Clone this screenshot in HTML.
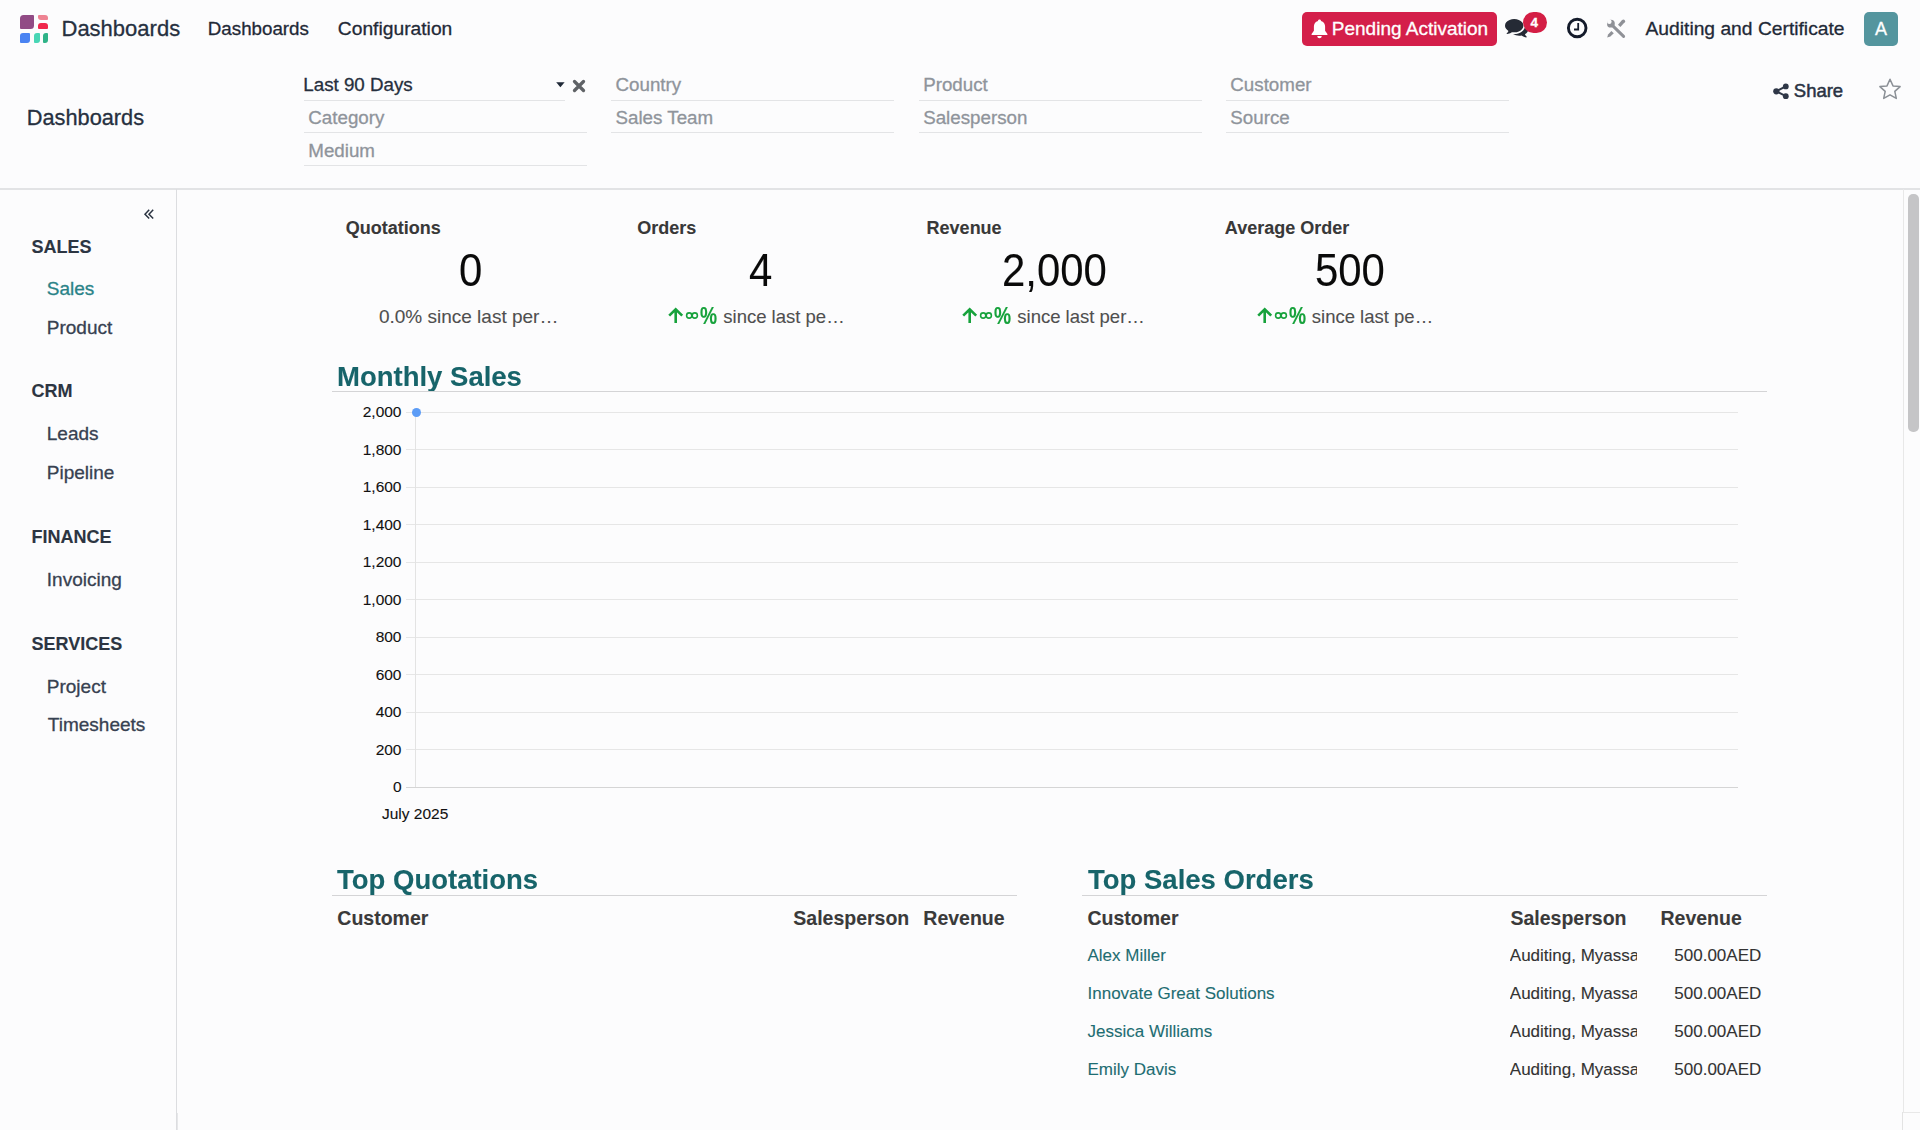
<!DOCTYPE html>
<html><head><meta charset="utf-8"><title>Dashboards</title>
<style>
html,body{margin:0;padding:0;}
body{width:1920px;height:1130px;overflow:hidden;position:relative;background:#fcfcfd;font-family:"Liberation Sans",sans-serif;}
.t{position:absolute;white-space:nowrap;-webkit-text-stroke:0.3px currentColor;}
.t.h{-webkit-text-stroke:0.1px currentColor;}
.r{position:absolute;display:block;}
</style></head><body>
<div class="r" style="left:20px;top:14.5px;width:14px;height:14.5px;background:#914b85;border-radius:3.5px 1px 3.5px 1px;"></div>
<div class="r" style="left:38px;top:14.5px;width:10px;height:5.5px;background:#ee8392;border-radius:1px 3px 1px 3px;"></div>
<div class="r" style="left:38px;top:23px;width:10px;height:6px;background:#f0284d;border-radius:3px 3px 1px 1px;"></div>
<div class="r" style="left:20px;top:33px;width:10px;height:10px;background:#4a83f2;border-radius:3px 1px 3px 1px;"></div>
<div class="r" style="left:34px;top:33px;width:5.5px;height:10px;background:#48d6b5;border-radius:3px 1px 3px 1px;"></div>
<div class="r" style="left:43px;top:33px;width:5px;height:10px;background:#2fb388;border-radius:3px 1px 3px 1px;"></div>
<div class="t" id="brand" style="left:61.5px;top:17.88px;font-size:22px;line-height:22px;color:#263040;">Dashboards</div>
<div class="t" id="m1" style="left:207.8px;top:20.13px;font-size:18.75px;line-height:18.75px;color:#1f2937;">Dashboards</div>
<div class="t" id="m2" style="left:337.8px;top:19.00px;font-size:19.25px;line-height:19.25px;color:#1f2937;">Configuration</div>
<div class="r" style="left:1301.5px;top:12px;width:195px;height:34px;background:#d41f4a;border-radius:5px;"></div>
<svg class="r" style="left:1311px;top:19px" width="17" height="20" viewBox="0 0 17 20"><path d="M8.5 0.5c0.9 0 1.5 0.6 1.5 1.4c2.6 0.6 4.1 2.9 4.1 5.6v4.2l2.3 3.3v1.1H0.6v-1.1l2.3-3.3V7.5c0-2.7 1.5-5 4.1-5.6c0-0.8 0.6-1.4 1.5-1.4z M6.3 17h4.4c0 1.3-1 2.3-2.2 2.3s-2.2-1-2.2-2.3z" fill="#fff"/></svg>
<div class="t" id="pend" style="left:1331.8px;top:19.32px;font-size:19px;line-height:19px;color:#fff;">Pending Activation</div>
<svg class="r" style="left:1505.4px;top:19.2px" width="23.4" height="18.4" viewBox="0 256 1792 1408"><path d="M1408 768q0 139-94 257t-256.5 186.5-353.5 68.5q-86 0-176-16-124 88-278 128-36 9-86 16h-3q-11 0-20.5-8t-11.5-21q-1-3-1-6.5t.5-6.5 2-6l2.5-5 3.5-5.5 4-5 4.5-5 4-4.5q5-6 23-25t26-29.5 22.5-29 25-38.5 20.5-44q-124-72-195-177t-71-224q0-139 94-257t256.5-186.5 353.5-68.5 353.5 68.5 256.5 186.5 94 257zm384 256q0 120-71 224.5t-195 176.5q10 24 20.5 44t25 38.5 22.5 29 26 29.5 23 25q1 1 4 4.5t4.5 5 4 5 3.5 5.5l2.5 5 2 6 .5 6.5-1 6.5q-3 14-13 22t-22 7q-50-7-86-16-154-40-278-128-90 16-176 16-271 0-472-132 58 4 88 4 161 0 309-45t264-129q125-92 192-212t67-254q0-77-23-152 129 71 204 178t75 230z" fill="#252a35"/></svg>
<div class="r" style="left:1523px;top:12px;width:23.5px;height:21px;background:#d41e45;border-radius:11px;"></div>
<div class="t" id="badge" style="left:1530.6px;top:15.67px;font-size:13.5px;line-height:13.5px;color:#fff;font-weight:700;">4</div>
<svg class="r" style="left:1565px;top:16px" width="25" height="25" viewBox="0 0 25 25"><circle cx="12.2" cy="12" r="8.8" fill="none" stroke="#141b2b" stroke-width="2.9"/><path d="M13.2 7v6.5H9" fill="none" stroke="#141b2b" stroke-width="1.8"/></svg>
<svg class="r" style="left:1603px;top:16px" width="26" height="25" viewBox="0 0 26 25"><defs><mask id="wm"><rect x="0" y="0" width="26" height="25" fill="#fff"/><circle cx="6.3" cy="5.8" r="2.3" fill="#000"/></mask></defs><path d="M10.6 10.6L20.6 20.4" stroke="#8f9197" stroke-width="3" stroke-linecap="round"/><circle cx="7.9" cy="7.7" r="3.9" fill="#8f9197" mask="url(#wm)"/><path d="M16.2 9.8L20.4 5.2" stroke="#8f9197" stroke-width="3.4"/><circle cx="20.4" cy="5.2" r="1.7" fill="#8f9197"/><path d="M8.4 15L10.8 17.3L7.4 20.6L4.2 21.6L5.1 18.5z" fill="#8f9197"/></svg>
<div class="t" id="user" style="left:1645.5px;top:19.00px;font-size:19.25px;line-height:19.25px;color:#1f2937;">Auditing and Certificate</div>
<div class="r" style="left:1864px;top:12px;width:34px;height:34px;background:#54959e;border-radius:5px;"></div>
<div class="t" id="av" style="left:1864px;top:20.06px;font-size:18px;line-height:18px;color:#fff;width:34px;text-align:center;">A</div>
<div class="t" id="bc" style="left:26.8px;top:107.09px;font-size:21.75px;line-height:21.75px;color:#263040;">Dashboards</div>
<div class="t" id="f1" style="left:303.3px;top:76.33px;font-size:18.75px;line-height:18.75px;color:#262f3d;">Last 90 Days</div>
<div class="r" style="left:303.8px;top:100px;width:261.5px;height:1px;background:#e3e4e6;"></div>
<svg class="r" style="left:556px;top:81.5px" width="9" height="6" viewBox="0 0 9 6"><path d="M0.2 0.3h8.4L4.4 5.2z" fill="#1f2937"/></svg>
<svg class="r" style="left:572px;top:79px" width="14" height="14" viewBox="0 0 14 14"><path d="M2.5 2.5l9 9M11.5 2.5l-9 9" stroke="#5f6266" stroke-width="3.3" stroke-linecap="round"/></svg>
<div class="t" id="ph01" style="left:308.3px;top:108.73px;font-size:18.75px;line-height:18.75px;color:#8f949b;">Category</div>
<div class="r" style="left:303.8px;top:132.2px;width:283px;height:1px;background:#e3e4e6;"></div>
<div class="t" id="ph02" style="left:308.3px;top:141.53px;font-size:18.75px;line-height:18.75px;color:#8f949b;">Medium</div>
<div class="r" style="left:303.8px;top:165.4px;width:283px;height:1px;background:#e3e4e6;"></div>
<div class="t" id="ph10" style="left:615.5px;top:76.33px;font-size:18.75px;line-height:18.75px;color:#8f949b;">Country</div>
<div class="r" style="left:611px;top:100px;width:283px;height:1px;background:#e3e4e6;"></div>
<div class="t" id="ph11" style="left:615.5px;top:108.73px;font-size:18.75px;line-height:18.75px;color:#8f949b;">Sales Team</div>
<div class="r" style="left:611px;top:132.2px;width:283px;height:1px;background:#e3e4e6;"></div>
<div class="t" id="ph20" style="left:923.2px;top:76.33px;font-size:18.75px;line-height:18.75px;color:#8f949b;">Product</div>
<div class="r" style="left:918.7px;top:100px;width:283px;height:1px;background:#e3e4e6;"></div>
<div class="t" id="ph21" style="left:923.2px;top:108.73px;font-size:18.75px;line-height:18.75px;color:#8f949b;">Salesperson</div>
<div class="r" style="left:918.7px;top:132.2px;width:283px;height:1px;background:#e3e4e6;"></div>
<div class="t" id="ph30" style="left:1230.3px;top:76.33px;font-size:18.75px;line-height:18.75px;color:#8f949b;">Customer</div>
<div class="r" style="left:1225.8px;top:100px;width:283px;height:1px;background:#e3e4e6;"></div>
<div class="t" id="ph31" style="left:1230.3px;top:108.73px;font-size:18.75px;line-height:18.75px;color:#8f949b;">Source</div>
<div class="r" style="left:1225.8px;top:132.2px;width:283px;height:1px;background:#e3e4e6;"></div>
<svg class="r" style="left:1771px;top:82px" width="20" height="18" viewBox="0 0 20 18"><path d="M5.3 9.3L14.8 4.4M5.3 9.3L14.8 14.2" stroke="#2f3747" stroke-width="2"/><circle cx="5.3" cy="9.3" r="3.1" fill="#2f3747"/><circle cx="14.8" cy="4.4" r="2.9" fill="#2f3747"/><circle cx="14.8" cy="14.2" r="2.9" fill="#2f3747"/></svg>
<div class="t" id="share" style="left:1793.8px;top:82.14px;font-size:18.5px;line-height:18.5px;color:#2a3343;-webkit-text-stroke:0.5px #2a3343;">Share</div>
<svg class="r" style="left:1877px;top:77px" width="26" height="25" viewBox="0 0 26 25"><path d="M13 2.3l3 6.6l7.1 0.7l-5.3 4.8l1.5 7l-6.3-3.6l-6.3 3.6l1.5-7l-5.3-4.8l7.1-0.7z" fill="none" stroke="#8b9096" stroke-width="1.5" stroke-linejoin="round"/></svg>
<div class="r" style="left:0px;top:188px;width:1920px;height:1.5px;background:#e2e3e5;"></div>
<div class="r" style="left:176px;top:189px;width:1px;height:941px;background:#dcdde0;"></div>
<div class="r" style="left:177px;top:1113px;width:1px;height:17px;background:#e6e7e9;"></div>
<svg class="r" style="left:142.8px;top:208px" width="13" height="13" viewBox="0 0 13 13"><path d="M6.2 1.8L2 6.2l4.2 4.4M10.2 1.8L6 6.2l4.2 4.4" fill="none" stroke="#2b3442" stroke-width="1.5"/></svg>
<div class="t h" id="s_sales" style="left:31.5px;top:237.56px;font-size:18px;line-height:18px;color:#2c3542;font-weight:700;">SALES</div>
<div class="t" id="s1" style="left:46.8px;top:279.42px;font-size:19px;line-height:19px;color:#2a8388;">Sales</div>
<div class="t" id="s2" style="left:46.8px;top:317.72px;font-size:19px;line-height:19px;color:#374151;">Product</div>
<div class="t h" id="s_crm" style="left:31.5px;top:382.26px;font-size:18px;line-height:18px;color:#2c3542;font-weight:700;">CRM</div>
<div class="t" id="s3" style="left:46.8px;top:424.42px;font-size:19px;line-height:19px;color:#374151;">Leads</div>
<div class="t" id="s4" style="left:46.8px;top:462.72px;font-size:19px;line-height:19px;color:#374151;">Pipeline</div>
<div class="t h" id="s_fin" style="left:31.5px;top:527.76px;font-size:18px;line-height:18px;color:#2c3542;font-weight:700;">FINANCE</div>
<div class="t" id="s5" style="left:46.8px;top:570.22px;font-size:19px;line-height:19px;color:#374151;">Invoicing</div>
<div class="t h" id="s_srv" style="left:31.5px;top:634.76px;font-size:18px;line-height:18px;color:#2c3542;font-weight:700;">SERVICES</div>
<div class="t" id="s6" style="left:46.8px;top:676.92px;font-size:19px;line-height:19px;color:#374151;">Project</div>
<div class="t" id="s7" style="left:47.8px;top:714.92px;font-size:19px;line-height:19px;color:#374151;">Timesheets</div>
<div class="t h" id="kt0" style="left:345.7px;top:218.86px;font-size:18px;line-height:18px;color:#383838;font-weight:700;">Quotations</div>
<div class="t h" id="kn0" style="left:458.7px;top:247.65px;font-size:45.3px;line-height:45.3px;color:#0a0a0a;transform:scaleX(0.925);transform-origin:0 0;">0</div>
<div class="t h" id="ks0" style="left:378.9px;top:306.92px;font-size:19px;line-height:19px;color:#4f4f4f;">0.0% since last per…</div>
<div class="t h" id="kt1" style="left:637.2px;top:218.86px;font-size:18px;line-height:18px;color:#383838;font-weight:700;">Orders</div>
<div class="t h" id="kn1" style="left:748.7px;top:247.65px;font-size:45.3px;line-height:45.3px;color:#0a0a0a;transform:scaleX(0.925);transform-origin:0 0;">4</div>
<svg class="r" style="left:668px;top:307px" width="16" height="17" viewBox="0 0 16 17"><path d="M7.7 16V2.5M1.2 8.6L7.7 2.2l6.5 6.4" fill="none" stroke="#17a23c" stroke-width="2.6"/></svg>
<svg class="r" style="left:684px;top:310px" width="16" height="12" viewBox="0 0 16 12"><ellipse cx="5.2" cy="5.5" rx="2.6" ry="2.65" fill="none" stroke="#17a23c" stroke-width="1.6"/><ellipse cx="10.8" cy="5.5" rx="2.6" ry="2.65" fill="none" stroke="#17a23c" stroke-width="1.6"/></svg>
<div class="t h" id="ki1" style="left:700.3px;top:306.67px;font-size:20px;line-height:20px;color:#17a23c;font-weight:700;transform:scale(0.96,1.17);transform-origin:0 16.9px;">%</div>
<div class="t h" id="ks1" style="left:723.3px;top:308.14px;font-size:18.5px;line-height:18.5px;color:#4f4f4f;">since last pe…</div>
<div class="t h" id="kt2" style="left:926.6px;top:218.86px;font-size:18px;line-height:18px;color:#383838;font-weight:700;">Revenue</div>
<div class="t h" id="kn2" style="left:1001.5px;top:247.65px;font-size:45.3px;line-height:45.3px;color:#0a0a0a;transform:scaleX(0.925);transform-origin:0 0;">2,000</div>
<svg class="r" style="left:962px;top:307px" width="16" height="17" viewBox="0 0 16 17"><path d="M7.7 16V2.5M1.2 8.6L7.7 2.2l6.5 6.4" fill="none" stroke="#17a23c" stroke-width="2.6"/></svg>
<svg class="r" style="left:978px;top:310px" width="16" height="12" viewBox="0 0 16 12"><ellipse cx="5.2" cy="5.5" rx="2.6" ry="2.65" fill="none" stroke="#17a23c" stroke-width="1.6"/><ellipse cx="10.8" cy="5.5" rx="2.6" ry="2.65" fill="none" stroke="#17a23c" stroke-width="1.6"/></svg>
<div class="t h" id="ki2" style="left:994.3px;top:306.67px;font-size:20px;line-height:20px;color:#17a23c;font-weight:700;transform:scale(0.96,1.17);transform-origin:0 16.9px;">%</div>
<div class="t h" id="ks2" style="left:1017.3px;top:308.14px;font-size:18.5px;line-height:18.5px;color:#4f4f4f;">since last per…</div>
<div class="t h" id="kt3" style="left:1224.8px;top:218.86px;font-size:18px;line-height:18px;color:#383838;font-weight:700;">Average Order</div>
<div class="t h" id="kn3" style="left:1314.5px;top:247.65px;font-size:45.3px;line-height:45.3px;color:#0a0a0a;transform:scaleX(0.925);transform-origin:0 0;">500</div>
<svg class="r" style="left:1256.5px;top:307px" width="16" height="17" viewBox="0 0 16 17"><path d="M7.7 16V2.5M1.2 8.6L7.7 2.2l6.5 6.4" fill="none" stroke="#17a23c" stroke-width="2.6"/></svg>
<svg class="r" style="left:1272.5px;top:310px" width="16" height="12" viewBox="0 0 16 12"><ellipse cx="5.2" cy="5.5" rx="2.6" ry="2.65" fill="none" stroke="#17a23c" stroke-width="1.6"/><ellipse cx="10.8" cy="5.5" rx="2.6" ry="2.65" fill="none" stroke="#17a23c" stroke-width="1.6"/></svg>
<div class="t h" id="ki3" style="left:1288.8px;top:306.67px;font-size:20px;line-height:20px;color:#17a23c;font-weight:700;transform:scale(0.96,1.17);transform-origin:0 16.9px;">%</div>
<div class="t h" id="ks3" style="left:1311.8px;top:308.14px;font-size:18.5px;line-height:18.5px;color:#4f4f4f;">since last pe…</div>
<div class="t h" id="h_ms" style="left:337px;top:361.67px;font-size:28.5px;line-height:28.5px;color:#17646a;font-weight:700;transform:scaleX(0.965);transform-origin:0 0;">Monthly Sales</div>
<div class="r" style="left:332px;top:390.5px;width:1435px;height:1.5px;background:#d4d4d6;"></div>
<div class="r" style="left:406px;top:411.5px;width:1332px;height:1px;background:#e6e6e6;"></div>
<div class="t h" id="yl0" style="right:1518.5px;text-align:right;top:404.08px;font-size:15.5px;line-height:15.5px;color:#111;">2,000</div>
<div class="r" style="left:406px;top:449.0px;width:1332px;height:1px;background:#e6e6e6;"></div>
<div class="t h" id="yl1" style="right:1518.5px;text-align:right;top:441.58px;font-size:15.5px;line-height:15.5px;color:#111;">1,800</div>
<div class="r" style="left:406px;top:486.5px;width:1332px;height:1px;background:#e6e6e6;"></div>
<div class="t h" id="yl2" style="right:1518.5px;text-align:right;top:479.08px;font-size:15.5px;line-height:15.5px;color:#111;">1,600</div>
<div class="r" style="left:406px;top:524.0px;width:1332px;height:1px;background:#e6e6e6;"></div>
<div class="t h" id="yl3" style="right:1518.5px;text-align:right;top:516.58px;font-size:15.5px;line-height:15.5px;color:#111;">1,400</div>
<div class="r" style="left:406px;top:561.5px;width:1332px;height:1px;background:#e6e6e6;"></div>
<div class="t h" id="yl4" style="right:1518.5px;text-align:right;top:554.08px;font-size:15.5px;line-height:15.5px;color:#111;">1,200</div>
<div class="r" style="left:406px;top:599.0px;width:1332px;height:1px;background:#e6e6e6;"></div>
<div class="t h" id="yl5" style="right:1518.5px;text-align:right;top:591.58px;font-size:15.5px;line-height:15.5px;color:#111;">1,000</div>
<div class="r" style="left:406px;top:636.5px;width:1332px;height:1px;background:#e6e6e6;"></div>
<div class="t h" id="yl6" style="right:1518.5px;text-align:right;top:629.08px;font-size:15.5px;line-height:15.5px;color:#111;">800</div>
<div class="r" style="left:406px;top:674.0px;width:1332px;height:1px;background:#e6e6e6;"></div>
<div class="t h" id="yl7" style="right:1518.5px;text-align:right;top:666.58px;font-size:15.5px;line-height:15.5px;color:#111;">600</div>
<div class="r" style="left:406px;top:711.5px;width:1332px;height:1px;background:#e6e6e6;"></div>
<div class="t h" id="yl8" style="right:1518.5px;text-align:right;top:704.08px;font-size:15.5px;line-height:15.5px;color:#111;">400</div>
<div class="r" style="left:406px;top:749.0px;width:1332px;height:1px;background:#e6e6e6;"></div>
<div class="t h" id="yl9" style="right:1518.5px;text-align:right;top:741.58px;font-size:15.5px;line-height:15.5px;color:#111;">200</div>
<div class="r" style="left:406px;top:786.5px;width:1332px;height:1px;background:#e6e6e6;"></div>
<div class="t h" id="yl10" style="right:1518.5px;text-align:right;top:779.08px;font-size:15.5px;line-height:15.5px;color:#111;">0</div>
<div class="r" style="left:415.2px;top:412px;width:1.2px;height:375px;background:#e3e3e3;"></div>
<div class="r" style="left:406px;top:786.5px;width:1332px;height:1.5px;background:#d5d5d5;"></div>
<div class="r" style="left:411.5px;top:407.5px;width:9px;height:9px;background:#5c9cf6;border-radius:50%;"></div>
<div class="t h" id="xl" style="left:382px;top:805.68px;font-size:15.5px;line-height:15.5px;color:#111;">July 2025</div>
<div class="t h" id="h_tq" style="left:336.5px;top:865.27px;font-size:28.5px;line-height:28.5px;color:#17646a;font-weight:700;transform:scaleX(0.965);transform-origin:0 0;">Top Quotations</div>
<div class="r" style="left:332.4px;top:894.8px;width:685px;height:1.5px;background:#d4d4d6;"></div>
<div class="t h" id="tq_c" style="left:337.3px;top:909.09px;font-size:19.5px;line-height:19.5px;color:#3a3a3a;font-weight:700;">Customer</div>
<div class="t h" id="tq_s" style="left:793.3px;top:909.09px;font-size:19.5px;line-height:19.5px;color:#3a3a3a;font-weight:700;">Salesperson</div>
<div class="t h" id="tq_r" style="left:923.3px;top:909.09px;font-size:19.5px;line-height:19.5px;color:#3a3a3a;font-weight:700;">Revenue</div>
<div class="t h" id="h_ts" style="left:1087.5px;top:865.27px;font-size:28.5px;line-height:28.5px;color:#17646a;font-weight:700;transform:scaleX(0.965);transform-origin:0 0;">Top Sales Orders</div>
<div class="r" style="left:1082.4px;top:894.8px;width:684.4px;height:1.5px;background:#d4d4d6;"></div>
<div class="t h" id="ts_c" style="left:1087.5px;top:909.09px;font-size:19.5px;line-height:19.5px;color:#3a3a3a;font-weight:700;">Customer</div>
<div class="t h" id="ts_s" style="left:1510.5px;top:909.09px;font-size:19.5px;line-height:19.5px;color:#3a3a3a;font-weight:700;">Salesperson</div>
<div class="t h" id="ts_r" style="left:1660.5px;top:909.09px;font-size:19.5px;line-height:19.5px;color:#3a3a3a;font-weight:700;">Revenue</div>
<div class="t h" id="rn0" style="left:1087.5px;top:947.11px;font-size:17px;line-height:17px;color:#1e6d72;">Alex Miller</div>
<div class="t h" id="rs0" style="left:1509.8px;top:947.11px;font-size:17px;line-height:17px;color:#333;width:127px;overflow:hidden;">Auditing, Myassar</div>
<div class="t h" id="rr0" style="left:1674.3px;top:947.11px;font-size:17px;line-height:17px;color:#333;">500.00AED</div>
<div class="t h" id="rn1" style="left:1087.5px;top:985.11px;font-size:17px;line-height:17px;color:#1e6d72;">Innovate Great Solutions</div>
<div class="t h" id="rs1" style="left:1509.8px;top:985.11px;font-size:17px;line-height:17px;color:#333;width:127px;overflow:hidden;">Auditing, Myassar</div>
<div class="t h" id="rr1" style="left:1674.3px;top:985.11px;font-size:17px;line-height:17px;color:#333;">500.00AED</div>
<div class="t h" id="rn2" style="left:1087.5px;top:1023.11px;font-size:17px;line-height:17px;color:#1e6d72;">Jessica Williams</div>
<div class="t h" id="rs2" style="left:1509.8px;top:1023.11px;font-size:17px;line-height:17px;color:#333;width:127px;overflow:hidden;">Auditing, Myassar</div>
<div class="t h" id="rr2" style="left:1674.3px;top:1023.11px;font-size:17px;line-height:17px;color:#333;">500.00AED</div>
<div class="t h" id="rn3" style="left:1087.5px;top:1061.11px;font-size:17px;line-height:17px;color:#1e6d72;">Emily Davis</div>
<div class="t h" id="rs3" style="left:1509.8px;top:1061.11px;font-size:17px;line-height:17px;color:#333;width:127px;overflow:hidden;">Auditing, Myassar</div>
<div class="t h" id="rr3" style="left:1674.3px;top:1061.11px;font-size:17px;line-height:17px;color:#333;">500.00AED</div>
<div class="r" style="left:1903px;top:189px;width:1px;height:923px;background:#e8e8e8;"></div>
<div class="r" style="left:1908px;top:193.5px;width:10.5px;height:238px;background:#c5c5c7;border-radius:5px;"></div>
<div class="r" style="left:1903px;top:1111.5px;width:17px;height:1px;background:#e8e8e8;"></div>
<div class="r" style="left:1901.5px;top:1112px;width:1.5px;height:18px;background:#e3e3e3;"></div>
</body></html>
